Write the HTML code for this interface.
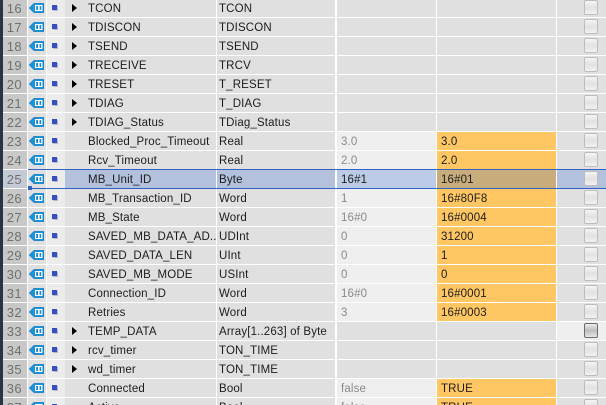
<!DOCTYPE html>
<html><head><meta charset="utf-8"><style>
html,body{margin:0;padding:0;width:606px;height:405px;overflow:hidden;background:#fff}
body{position:relative;font:11.5px/20px "Liberation Sans",sans-serif;color:#1c1c1c;letter-spacing:.15px}
#strip{position:absolute;left:0;top:0;width:3px;height:405px;background:#2a3444}
.r{position:absolute;left:3px;width:603px;height:18px}
.r>*{position:absolute;top:0;height:18px;white-space:nowrap;overflow:hidden}
.n{left:0;width:24px;background:#c8c8c8;color:#707070;text-align:right;font-size:13px;letter-spacing:.4px}
.n i{font-style:normal;padding-right:5px}
.ic{left:25px;width:18px;background:#e0e0e0}
.sq{left:44px;width:18px;background:#ececec}
.sq:after{content:"";position:absolute;left:5px;top:6px;width:5px;height:5px;background:#3450c4;box-shadow:1px 1px 0 #b4b8c8}
.nm{left:62px;width:151px;background:#e0e0e0;padding-left:23px;box-sizing:border-box}
.ar:before{content:"";position:absolute;left:7px;top:5px;border-left:5px solid #000;border-top:4.5px solid transparent;border-bottom:4.5px solid transparent}
.ty{left:214px;width:118px;background:#e0e0e0;padding-left:2px;box-sizing:border-box}
.st{left:334px;width:99px;background:#e0e0e0;padding-left:4px;box-sizing:border-box;color:#8a8a8a}
.v .st{background:#efefef}
.mo{left:434px;width:119px;background:#e0e0e0;padding-left:4px;box-sizing:border-box}
.v .mo{background:#fec764}
.c{left:554px;width:49px;background:#e0e0e0}
.c:after{content:"";position:absolute;left:27px;top:1px;width:12px;height:13px;border:1px solid #bdbdbd;border-radius:2px;background:linear-gradient(#f4f4f4,#e2e2e2 50%,#f2f2f2)}
.sel .n{background:#c3cad6}
.sel .ic{background:#e0e0e0}
.sel .nm{background:#b3c1dc;padding-left:23px}
.sel .ty{background:#b3c1dc}
.sel .st{background:#bccbe8;color:#1c1c1c}
.sel .mo{background:#c9ac7c}
.sel .c{background:#b3c1dc}
.foc .c{background:#efefef}
.foc .c:after{border-color:#6e6e6e;background:linear-gradient(#ececec,#bdbdbd 50%,#e6e6e6)}
.bl{position:absolute;left:28px;width:578px;height:1px;background:#3263c4}
.ic svg{position:absolute;left:1px;top:4px;width:15px;height:10px}
</style></head><body>
<svg width="0" height="0" style="display:none"><symbol id="t" viewBox="0 0 15 10"><path d="M0.3 5L5 0.4H14.7V9.6H5Z" fill="#1a95dc" stroke="#1278bd" stroke-width=".6"/><rect x="6" y="2" width="7.5" height="6" fill="#fff"/><rect x="7.2" y="3" width="1.8" height="4" fill="#1a8ad2"/><rect x="10.6" y="3" width="1.6" height="4" fill="#1a8ad2"/></symbol></svg>
<div id="strip"></div>

<div class="r" style="top:-1px"><span class="n"><i>16</i></span><span class="ic"><svg><use href="#t"/></svg></span><span class="sq"></span><span class="nm ar">TCON</span><span class="ty">TCON</span><span class="st"></span><span class="mo"></span><span class="c"></span></div>
<div class="r" style="top:18px"><span class="n"><i>17</i></span><span class="ic"><svg><use href="#t"/></svg></span><span class="sq"></span><span class="nm ar">TDISCON</span><span class="ty">TDISCON</span><span class="st"></span><span class="mo"></span><span class="c"></span></div>
<div class="r" style="top:37px"><span class="n"><i>18</i></span><span class="ic"><svg><use href="#t"/></svg></span><span class="sq"></span><span class="nm ar">TSEND</span><span class="ty">TSEND</span><span class="st"></span><span class="mo"></span><span class="c"></span></div>
<div class="r" style="top:56px"><span class="n"><i>19</i></span><span class="ic"><svg><use href="#t"/></svg></span><span class="sq"></span><span class="nm ar">TRECEIVE</span><span class="ty">TRCV</span><span class="st"></span><span class="mo"></span><span class="c"></span></div>
<div class="r" style="top:75px"><span class="n"><i>20</i></span><span class="ic"><svg><use href="#t"/></svg></span><span class="sq"></span><span class="nm ar">TRESET</span><span class="ty">T_RESET</span><span class="st"></span><span class="mo"></span><span class="c"></span></div>
<div class="r" style="top:94px"><span class="n"><i>21</i></span><span class="ic"><svg><use href="#t"/></svg></span><span class="sq"></span><span class="nm ar">TDIAG</span><span class="ty">T_DIAG</span><span class="st"></span><span class="mo"></span><span class="c"></span></div>
<div class="r" style="top:113px"><span class="n"><i>22</i></span><span class="ic"><svg><use href="#t"/></svg></span><span class="sq"></span><span class="nm ar">TDIAG_Status</span><span class="ty">TDiag_Status</span><span class="st"></span><span class="mo"></span><span class="c"></span></div>
<div class="r v" style="top:132px"><span class="n"><i>23</i></span><span class="ic"><svg><use href="#t"/></svg></span><span class="sq"></span><span class="nm">Blocked_Proc_Timeout</span><span class="ty">Real</span><span class="st">3.0</span><span class="mo">3.0</span><span class="c"></span></div>
<div class="r v" style="top:151px"><span class="n"><i>24</i></span><span class="ic"><svg><use href="#t"/></svg></span><span class="sq"></span><span class="nm">Rcv_Timeout</span><span class="ty">Real</span><span class="st">2.0</span><span class="mo">2.0</span><span class="c"></span></div>
<div class="r v sel" style="top:170px"><span class="n"><i>25</i></span><span class="ic"><svg><use href="#t"/></svg></span><span class="sq"></span><span class="nm">MB_Unit_ID</span><span class="ty">Byte</span><span class="st">16#1</span><span class="mo">16#01</span><span class="c"></span></div>
<div class="r v" style="top:189px"><span class="n"><i>26</i></span><span class="ic"><svg><use href="#t"/></svg></span><span class="sq"></span><span class="nm">MB_Transaction_ID</span><span class="ty">Word</span><span class="st">1</span><span class="mo">16#80F8</span><span class="c"></span></div>
<div class="r v" style="top:208px"><span class="n"><i>27</i></span><span class="ic"><svg><use href="#t"/></svg></span><span class="sq"></span><span class="nm">MB_State</span><span class="ty">Word</span><span class="st">16#0</span><span class="mo">16#0004</span><span class="c"></span></div>
<div class="r v" style="top:227px"><span class="n"><i>28</i></span><span class="ic"><svg><use href="#t"/></svg></span><span class="sq"></span><span class="nm">SAVED_MB_DATA_AD...</span><span class="ty">UDInt</span><span class="st">0</span><span class="mo">31200</span><span class="c"></span></div>
<div class="r v" style="top:246px"><span class="n"><i>29</i></span><span class="ic"><svg><use href="#t"/></svg></span><span class="sq"></span><span class="nm">SAVED_DATA_LEN</span><span class="ty">UInt</span><span class="st">0</span><span class="mo">1</span><span class="c"></span></div>
<div class="r v" style="top:265px"><span class="n"><i>30</i></span><span class="ic"><svg><use href="#t"/></svg></span><span class="sq"></span><span class="nm">SAVED_MB_MODE</span><span class="ty">USInt</span><span class="st">0</span><span class="mo">0</span><span class="c"></span></div>
<div class="r v" style="top:284px"><span class="n"><i>31</i></span><span class="ic"><svg><use href="#t"/></svg></span><span class="sq"></span><span class="nm">Connection_ID</span><span class="ty">Word</span><span class="st">16#0</span><span class="mo">16#0001</span><span class="c"></span></div>
<div class="r v" style="top:303px"><span class="n"><i>32</i></span><span class="ic"><svg><use href="#t"/></svg></span><span class="sq"></span><span class="nm">Retries</span><span class="ty">Word</span><span class="st">3</span><span class="mo">16#0003</span><span class="c"></span></div>
<div class="r foc" style="top:322px"><span class="n"><i>33</i></span><span class="ic"><svg><use href="#t"/></svg></span><span class="sq"></span><span class="nm ar">TEMP_DATA</span><span class="ty">Array[1..263] of Byte</span><span class="st"></span><span class="mo"></span><span class="c"></span></div>
<div class="r" style="top:341px"><span class="n"><i>34</i></span><span class="ic"><svg><use href="#t"/></svg></span><span class="sq"></span><span class="nm ar">rcv_timer</span><span class="ty">TON_TIME</span><span class="st"></span><span class="mo"></span><span class="c"></span></div>
<div class="r" style="top:360px"><span class="n"><i>35</i></span><span class="ic"><svg><use href="#t"/></svg></span><span class="sq"></span><span class="nm ar">wd_timer</span><span class="ty">TON_TIME</span><span class="st"></span><span class="mo"></span><span class="c"></span></div>
<div class="r v" style="top:379px"><span class="n"><i>36</i></span><span class="ic"><svg><use href="#t"/></svg></span><span class="sq"></span><span class="nm">Connected</span><span class="ty">Bool</span><span class="st">false</span><span class="mo">TRUE</span><span class="c"></span></div>
<div class="r v" style="top:398px"><span class="n"><i>37</i></span><span class="ic"><svg><use href="#t"/></svg></span><span class="sq"></span><span class="nm">Active</span><span class="ty">Bool</span><span class="st">false</span><span class="mo">TRUE</span><span class="c"></span></div>

<div class="bl" style="top:169px"></div>
<div class="bl" style="top:188px"></div>
<div style="position:absolute;left:28px;top:186px;width:4px;height:4px;background:#3263c4"></div>
</body></html>
